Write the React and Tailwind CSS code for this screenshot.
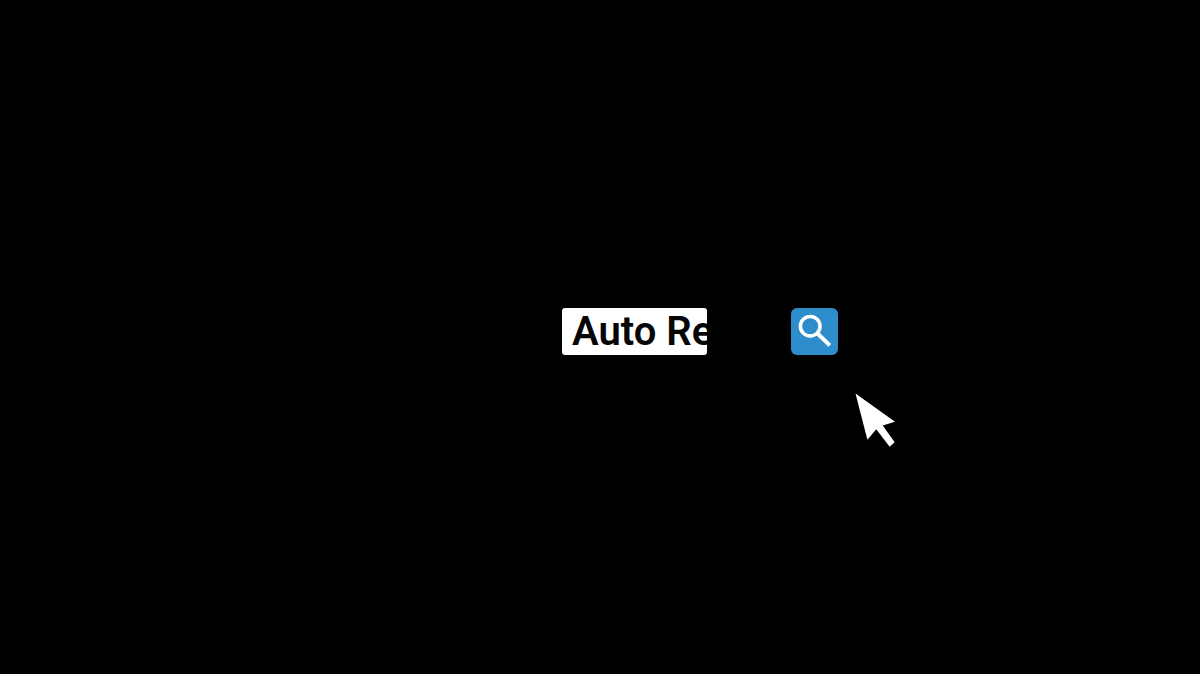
export default function App() {
  return (
    <main className="flex min-h-screen items-center justify-center overflow-hidden bg-black pb-3 pl-[200px]">
      <form
        className="relative flex items-center gap-[84px]"
        onSubmit={(event) => event.preventDefault()}
      >
        <input
          type="text"
          aria-label="Search"
          defaultValue="Auto Re"
          className="h-[47px] w-[145px] rounded-[3px] bg-white pl-2.5 font-['Roboto',sans-serif] text-[40px] leading-[47px] font-semibold text-[#060606] outline-none"
        />
        <button
          type="submit"
          aria-label="Submit search"
          className="size-[47px] rounded-md bg-[#2f8dcb]"
        >
          <svg viewBox="0 0 47 47" className="size-full" fill="none" stroke="white" aria-hidden="true">
            <circle cx="19.2" cy="18.2" r="9.8" strokeWidth="3.5" />
            <path d="M26 25 38.8 37.4" strokeWidth="4" />
          </svg>
        </button>
        <svg
          viewBox="0 0 40 54"
          className="pointer-events-none absolute top-[85px] left-[293px] h-[54px] w-10"
          fill="white"
          aria-hidden="true"
        >
          <path d="M.5.5 40 28.8 27.7 32.5 39.7 49.2 34.6 53.7 21.3 36.2 12.4 46.8Z" />
        </svg>
      </form>
    </main>
  );
}
